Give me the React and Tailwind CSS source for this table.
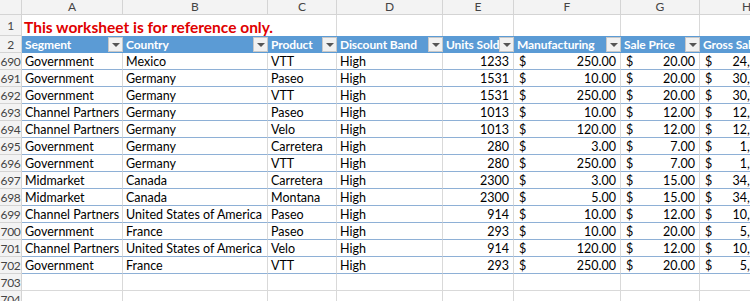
import React from "react";

const cols = [
  { key: "A", w: "w-[101px]" },
  { key: "B", w: "w-[145px]" },
  { key: "C", w: "w-[69px]" },
  { key: "D", w: "w-[106px]" },
  { key: "E", w: "w-[71px]" },
  { key: "F", w: "w-[107px]" },
  { key: "G", w: "w-[79px]" },
  { key: "H", w: "w-[94px]" },
];

const headers = [
  "Segment",
  "Country",
  "Product",
  "Discount Band",
  "Units Sold",
  "Manufacturing",
  "Sale Price",
  "Gross Sales",
];

const rows = [
  [690, "Government", "Mexico", "VTT", "High", 1233, "250.00", "20.00", "24,660.00"],
  [691, "Government", "Germany", "Paseo", "High", 1531, "10.00", "20.00", "30,620.00"],
  [692, "Government", "Germany", "VTT", "High", 1531, "250.00", "20.00", "30,620.00"],
  [693, "Channel Partners", "Germany", "Paseo", "High", 1013, "10.00", "12.00", "12,156.00"],
  [694, "Channel Partners", "Germany", "Velo", "High", 1013, "120.00", "12.00", "12,156.00"],
  [695, "Government", "Germany", "Carretera", "High", 280, "3.00", "7.00", "1,960.00"],
  [696, "Government", "Germany", "VTT", "High", 280, "250.00", "7.00", "1,960.00"],
  [697, "Midmarket", "Canada", "Carretera", "High", 2300, "3.00", "15.00", "34,500.00"],
  [698, "Midmarket", "Canada", "Montana", "High", 2300, "5.00", "15.00", "34,500.00"],
  [699, "Channel Partners", "United States of America", "Paseo", "High", 914, "10.00", "12.00", "10,968.00"],
  [700, "Government", "France", "Paseo", "High", 293, "10.00", "20.00", "5,860.00"],
  [701, "Channel Partners", "United States of America", "Velo", "High", 914, "120.00", "12.00", "10,968.00"],
  [702, "Government", "France", "VTT", "High", 293, "250.00", "20.00", "5,860.00"],
];

function RowHead({ children, h }) {
  return (
    <div
      className={`w-[22px] shrink-0 ${h} flex items-center justify-center pt-[1px] bg-[#f3f3f3] border-r border-b border-[#d4d4d4] text-[12px] text-[#444] tracking-[-0.3px]`}
    >
      {children}
    </div>
  );
}

function FilterButton() {
  return (
    <div className="absolute right-0 top-[1px] w-[15px] h-[15px] bg-[#f1f1f1] border border-[#c8c8c8] flex items-center justify-center">
      <div className="w-0 h-0 border-l-[4px] border-r-[4px] border-t-[4px] border-l-transparent border-r-transparent border-t-[#555]" />
    </div>
  );
}

function Money({ value }) {
  return (
    <div className="flex justify-between pl-[5px] pr-[4px] whitespace-nowrap">
      <span>$</span>
      <span>{value}</span>
    </div>
  );
}

const cell = "shrink-0 border-r border-r-[#d9d9d9] border-b border-b-[#8eb0d6] whitespace-nowrap overflow-hidden pt-[3px]";

export default function App() {
  return (
    <div className="w-[750px] h-[301px] overflow-hidden bg-white font-['Lato',sans-serif] text-[12.5px] text-black leading-none">
      <div className="w-[1000px]">
        {/* column letters */}
        <div className="flex h-[15px]">
          <div className="w-[22px] shrink-0 bg-[#f3f3f3] border-r border-b border-[#d4d4d4]" />
          {cols.map((c) => (
            <div
              key={c.key}
              className={`${c.w} shrink-0 flex items-center justify-center bg-[#f3f3f3] border-r border-b border-[#d4d4d4] text-[12px] text-[#444]`}
            >
              {c.key}
            </div>
          ))}
        </div>

        {/* row 1: title */}
        <div className="flex h-[21px]">
          <RowHead h="h-[21px]">1</RowHead>
          <div className="w-[315px] shrink-0 border-r border-[#d9d9d9] flex items-end pl-[2px] pb-[1px] text-[#e00000] font-bold text-[15.5px] whitespace-nowrap">
            This worksheet is for reference only.
          </div>
          {cols.slice(3).map((c) => (
            <div key={c.key} className={`${c.w} shrink-0 border-r border-[#d9d9d9]`} />
          ))}
        </div>

        {/* row 2: table header */}
        <div className="flex h-[17px]">
          <RowHead h="h-[17px]">2</RowHead>
          {cols.map((c, i) => (
            <div
              key={c.key}
              className={`${c.w} shrink-0 relative bg-[#5b9bd5] text-white font-bold text-[12px] pl-[3px] pt-[3px] tracking-[-0.1px] whitespace-nowrap overflow-hidden`}
            >
              {headers[i]}
              {i < 7 && <FilterButton />}
            </div>
          ))}
        </div>

        {/* data rows */}
        {rows.map((r) => (
          <div key={r[0]} className="flex h-[17px]">
            <RowHead h="h-[17px]">{r[0]}</RowHead>
            <div className={`w-[101px] pl-[3px] ${cell}`}>{r[1]}</div>
            <div className={`w-[145px] pl-[3px] ${cell}`}>{r[2]}</div>
            <div className={`w-[69px] pl-[3px] ${cell}`}>{r[3]}</div>
            <div className={`w-[106px] pl-[3px] ${cell}`}>{r[4]}</div>
            <div className={`w-[71px] text-right pr-[4px] ${cell}`}>{r[5]}</div>
            <div className={`w-[107px] ${cell}`}>
              <Money value={r[6]} />
            </div>
            <div className={`w-[79px] ${cell}`}>
              <Money value={r[7]} />
            </div>
            <div className={`w-[94px] ${cell}`}>
              <Money value={r[8]} />
            </div>
          </div>
        ))}

        {/* empty rows */}
        {[703, 704].map((n) => (
          <div key={n} className="flex h-[17px]">
            <RowHead h="h-[17px]">{n}</RowHead>
            {cols.map((c) => (
              <div key={c.key} className={`${c.w} shrink-0 border-r border-b border-[#d9d9d9]`} />
            ))}
          </div>
        ))}
      </div>
    </div>
  );
}
